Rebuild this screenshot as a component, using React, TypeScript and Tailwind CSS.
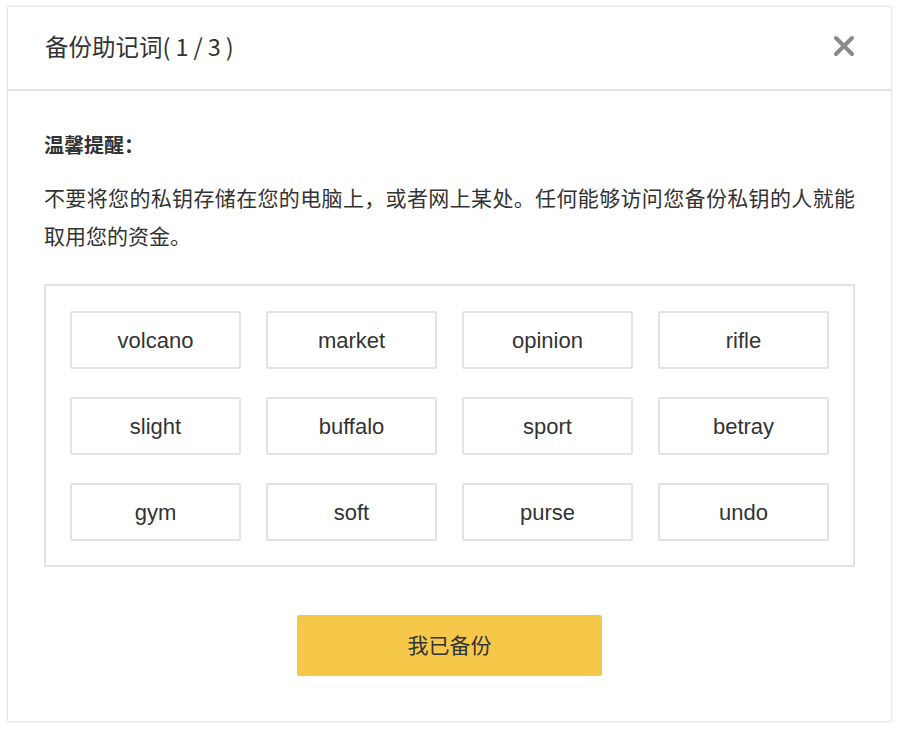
import React from "react";

const words = [
  "volcano", "market", "opinion", "rifle",
  "slight", "buffalo", "sport", "betray",
  "gym", "soft", "purse", "undo",
];

export default function App() {
  return (
    <div
      className="min-h-[730px] w-[900px] bg-white pl-[7px] pr-[8px] pt-[6px] pb-[8px]"
      style={{ fontFamily: '"Liberation Sans", "Noto Sans CJK SC", sans-serif' }}
    >
      <div className="flex h-[716px] flex-col rounded-[2px] border border-[#e6e6e6] bg-white shadow-[0_0_3px_rgba(0,0,0,0.08)]">
        {/* Header */}
        <div className="flex h-[84px] shrink-0 items-center justify-between border-b-2 border-[#e3e3e3] pl-[37px] pr-[35px]">
          <h1 className="-mt-[3px] font-['Noto_Sans_CJK_SC',sans-serif] text-[23.5px] font-normal text-[#333]">
            备份助记词<span className="tracking-[5px]">(1/3)</span>
          </h1>
          <button className="-mt-[4px] flex h-[24px] w-[24px] items-center justify-center">
            <svg width="22" height="22" viewBox="0 0 22 22">
              <path d="M3 3 L19 19 M19 3 L3 19" stroke="#8a8a8a" strokeWidth="4" strokeLinecap="round" />
            </svg>
          </button>
        </div>

        {/* Body */}
        <div className="flex flex-col px-[36px] pt-[42px]">
          <p className="text-[20px] font-bold leading-[26px] text-[#333]">温馨提醒：</p>
          <p className="mt-[21px] text-justify text-[21px] leading-[38px] text-[#333]">
            不要将您的私钥存储在您的电脑上，或者网上某处。任何能够访问您备份私钥的人就能取用您的资金。
          </p>

          <div className="mt-[28px] grid grid-cols-4 gap-x-[25px] gap-y-[28px] border-2 border-[#e3e3e3] px-[24px] pt-[25px] pb-[24px]">
            {words.map((w) => (
              <div
                key={w}
                className="flex h-[58px] items-center justify-center rounded-[2px] border-2 border-[#e3e3e3] text-[22px] text-[#333]"
              >
                {w}
              </div>
            ))}
          </div>

          <div className="mt-[48px] flex justify-center">
            <button className="h-[61px] w-[305px] rounded-[2px] bg-[#f5c84a] text-[21px] text-[#333]">
              我已备份
            </button>
          </div>
        </div>
      </div>
    </div>
  );
}
